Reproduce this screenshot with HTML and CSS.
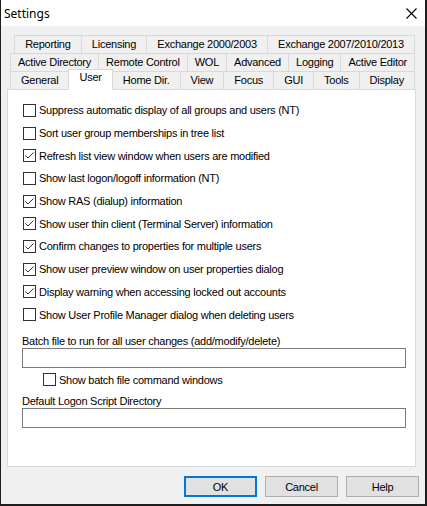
FILE: index.html
```html
<!DOCTYPE html>
<html>
<head>
<meta charset="utf-8">
<link rel="stylesheet" href="styles.css">
</head>
<body>
<div class="window">
  <div class="titlebar">
    <span class="title">Settings</span>
    <svg class="close" width="11" height="11" viewBox="0 0 11 11"><path d="M0.5 0.5 L10.5 10.5 M10.5 0.5 L0.5 10.5" stroke="#000" stroke-width="1.1" fill="none"/></svg>
  </div>
  <div class="body">
    <div class="tabs">
      <div class="tabrow r1">
        <div class="tab">Reporting</div>
        <div class="tab">Licensing</div>
        <div class="tab">Exchange 2000/2003</div>
        <div class="tab">Exchange 2007/2010/2013</div>
      </div>
      <div class="tabrow r2">
        <div class="tab">Active Directory</div>
        <div class="tab">Remote Control</div>
        <div class="tab">WOL</div>
        <div class="tab">Advanced</div>
        <div class="tab">Logging</div>
        <div class="tab">Active Editor</div>
      </div>
      <div class="tabrow r3">
        <div class="tab">General</div>
        <div class="tab sel">User</div>
        <div class="tab">Home Dir.</div>
        <div class="tab">View</div>
        <div class="tab">Focus</div>
        <div class="tab">GUI</div>
        <div class="tab">Tools</div>
        <div class="tab">Display</div>
      </div>
    </div>
    <div class="panel">
      <div class="checks">
        <label class="cb"><span class="box"></span><span>Suppress automatic display of all groups and users (NT)</span></label>
        <label class="cb"><span class="box"></span><span>Sort user group memberships in tree list</span></label>
        <label class="cb"><span class="box checked"><svg width="11" height="11" viewBox="0 0 11 11"><path d="M1.5 5.5 L4 8 L9.5 2.5" stroke="#333" stroke-width="1" fill="none"/></svg></span><span>Refresh list view window when users are modified</span></label>
        <label class="cb"><span class="box"></span><span>Show last logon/logoff information (NT)</span></label>
        <label class="cb"><span class="box checked"><svg width="11" height="11" viewBox="0 0 11 11"><path d="M1.5 5.5 L4 8 L9.5 2.5" stroke="#333" stroke-width="1" fill="none"/></svg></span><span>Show RAS (dialup) information</span></label>
        <label class="cb"><span class="box checked"><svg width="11" height="11" viewBox="0 0 11 11"><path d="M1.5 5.5 L4 8 L9.5 2.5" stroke="#333" stroke-width="1" fill="none"/></svg></span><span>Show user thin client (Terminal Server) information</span></label>
        <label class="cb"><span class="box checked"><svg width="11" height="11" viewBox="0 0 11 11"><path d="M1.5 5.5 L4 8 L9.5 2.5" stroke="#333" stroke-width="1" fill="none"/></svg></span><span>Confirm changes to properties for multiple users</span></label>
        <label class="cb"><span class="box checked"><svg width="11" height="11" viewBox="0 0 11 11"><path d="M1.5 5.5 L4 8 L9.5 2.5" stroke="#333" stroke-width="1" fill="none"/></svg></span><span>Show user preview window on user properties dialog</span></label>
        <label class="cb"><span class="box checked"><svg width="11" height="11" viewBox="0 0 11 11"><path d="M1.5 5.5 L4 8 L9.5 2.5" stroke="#333" stroke-width="1" fill="none"/></svg></span><span>Display warning when accessing locked out accounts</span></label>
        <label class="cb"><span class="box"></span><span>Show User Profile Manager dialog when deleting users</span></label>
      </div>
      <div class="flabel">Batch file to run for all user changes (add/modify/delete)</div>
      <div class="input"></div>
      <label class="cb sub"><span class="box"></span><span>Show batch file command windows</span></label>
      <div class="flabel second">Default Logon Script Directory</div>
      <div class="input"></div>
    </div>
    <div class="buttons">
      <div class="btn default">OK</div>
      <div class="btn">Cancel</div>
      <div class="btn">Help</div>
    </div>
  </div>
</div>
</body>
</html>
```

FILE: styles.css
```css
* { box-sizing: border-box; }
html, body { margin: 0; padding: 0; }
body {
  width: 427px;
  height: 506px;
  overflow: hidden;
  font-family: "Liberation Sans", Arial, sans-serif;
  font-size: 11px;
  letter-spacing: -0.25px;
  color: #000;
  background: #f0f0f0;
}
.window {
  height: 506px;
  display: flex;
  flex-direction: column;
  background: #f0f0f0;
  border-left: 1px solid #1e1e1e;
  border-right: 2px solid #1e1e1e;
  border-bottom: 2px solid #1e1e1e;
}
.titlebar {
  height: 26px;
  flex: none;
  background: #fff;
  display: flex;
  align-items: center;
  justify-content: space-between;
  padding: 1px 8px 0 3px;
}
.title {
  font-family: "Noto Sans", "Open Sans", sans-serif;
  font-size: 12px;
  letter-spacing: 0;
}
.close { display: block; }
.body {
  flex: 1;
  display: flex;
  flex-direction: column;
  padding: 9px 6px 7px 6px;
}
.tabs {
  display: flex;
  flex-direction: column;
  margin: 0 4px 0 3px;
}
.tabrow {
  display: flex;
  height: 18px;
}
.tabrow.r1 { margin-left: 4px; }
.tab {
  flex: 1 1 auto;
  border: 1px solid #d9d9d9;
  border-bottom: none;
  margin-left: -1px;
  padding: 0 6px;
  text-align: center;
  line-height: 17px;
  white-space: nowrap;
  background: #f0f0f0;
}
.tab:first-child { margin-left: 0; }
.r3 {
  align-items: flex-end;
  position: relative;
  z-index: 1;
}
.tab.sel {
  background: #fff;
  height: 21px;
  margin-bottom: -1px;
  line-height: 15px;
}
.panel {
  height: 378px;
  flex: none;
  margin-right: 3px;
  background: #fff;
  border: 1px solid #d9d9d9;
  padding: 9px 10px 0 14px;
}
.checks {
  display: flex;
  flex-direction: column;
}
.cb {
  display: flex;
  align-items: center;
  height: 22.7px;
  white-space: nowrap;
}
.box {
  width: 13px;
  height: 13px;
  flex: none;
  border: 1px solid #333;
  background: #fff;
  margin-left: 1px;
  margin-right: 3px;
  display: flex;
}
.flabel {
  margin-top: 9px;
  height: 13px;
  line-height: 13px;
}
.flabel.second { margin-top: 3px; }
.input {
  width: 384px;
  height: 20px;
  border: 1px solid #7a7a7a;
  background: #fff;
}
.cb.sub {
  height: 24px;
  padding-left: 20px;
}
.buttons {
  margin-top: 9px;
  display: flex;
  justify-content: flex-end;
  gap: 8px;
}
.btn {
  width: 73px;
  height: 21px;
  background: #e1e1e1;
  border: 1px solid #adadad;
  display: flex;
  align-items: center;
  justify-content: center;
}
.btn.default {
  border: 2px solid #0078d7;
}
```
